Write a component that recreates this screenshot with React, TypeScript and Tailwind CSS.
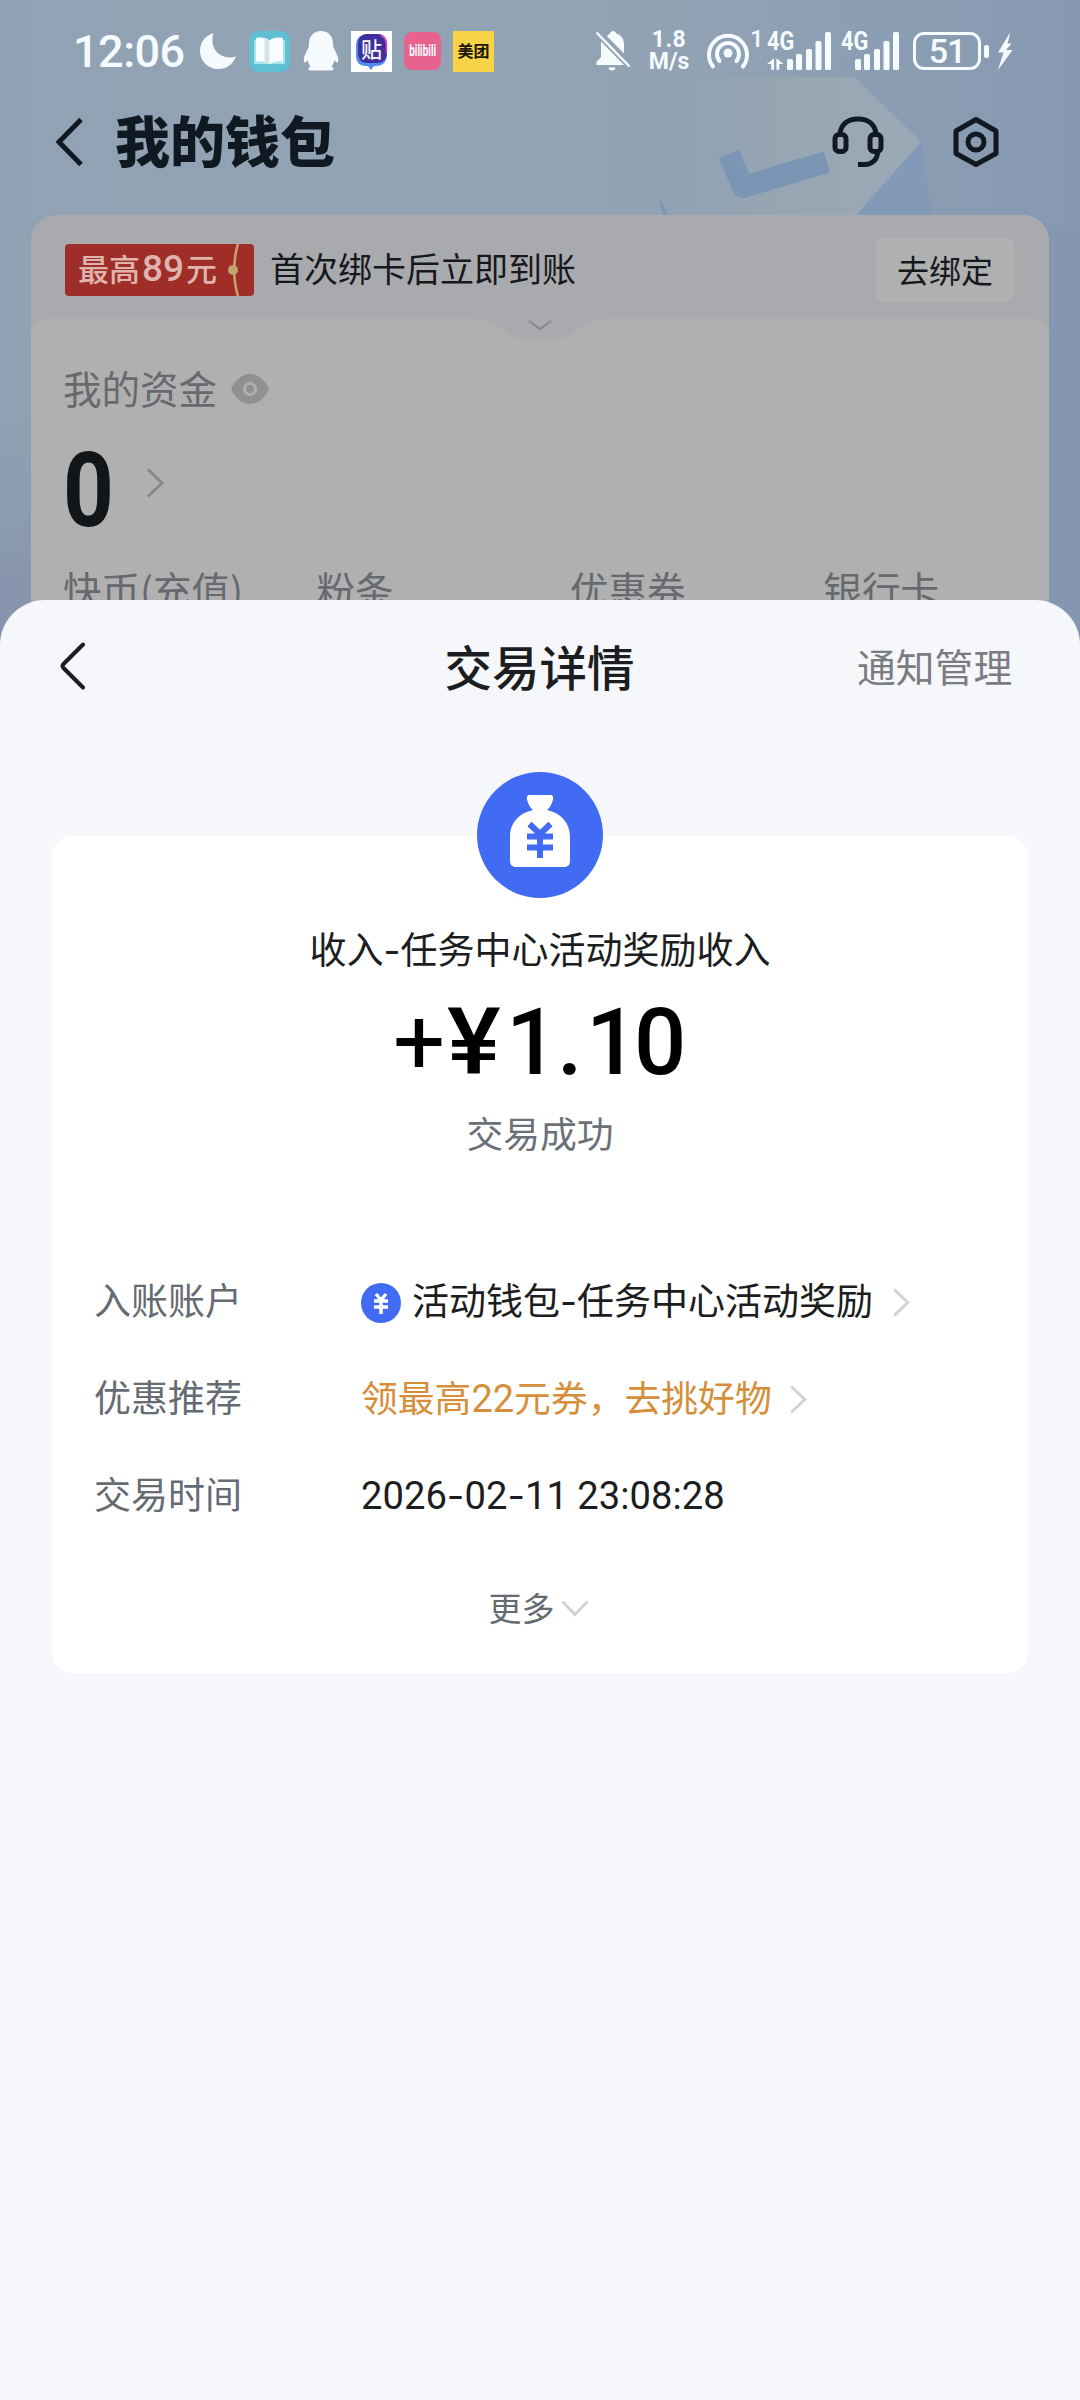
import React from "react";

interface DetailRowProps {
  label: string;
  children: React.ReactNode;
}

const accountTabs = ["快币(充值)", "粉条", "优惠券", "银行卡"];

// Wide hyphen used between words and in dates
function Dash() {
  return <span className="font-[Inter]">-</span>;
}

function ChevronRight({ className }: { className: string }) {
  return (
    <svg viewBox="0 0 18 30" fill="none" stroke="currentColor" strokeWidth="3" className={className}>
      <path d="M2 1.5 16 15 2 28.5" />
    </svg>
  );
}

function SignalBars() {
  return (
    <svg viewBox="0 0 44 38" className="h-[38px] w-[44px] shrink-0" fill="currentColor">
      <rect x="0" y="27" width="6" height="11" rx="1.5" />
      <rect x="9" y="22" width="6" height="16" rx="1.5" />
      <rect x="19" y="17" width="6" height="21" rx="1.5" />
      <rect x="28.500" y="9" width="6" height="29" rx="1.5" />
      <rect x="38" y="0" width="6" height="38" rx="1.5" />
    </svg>
  );
}

function StatusBar() {
  return (
    <div className="flex h-[102px] items-center pl-[73px] font-[Roboto] text-[#f6fbff]">
      <span className="w-[127px] text-[45px] leading-none font-medium tracking-[-0.5px]">12:06</span>
      {/* app notification icons */}
      <svg viewBox="0 0 36 36" className="h-9 w-9" fill="currentColor">
        <path d="M13.500 0C5 2.500 0 9.500 0 18c0 10 8 18 18 18 8.500 0 15-4.500 18-12.500C21 28 8.500 16 13.500 0Z" />
      </svg>
      <svg viewBox="0 0 41 41" className="ml-[13px] h-[41px] w-[41px]">
        <rect width="41" height="41" rx="9" fill="#5fbfd3" />
        <rect x="5" y="9" width="31" height="24" rx="1.500" fill="#a9e3ee" />
        <path d="M7 7c5-1 10-.5 13.500 2.500C24 6.500 29 6 34 7v23.500c-5-.5-9.500 0-13.500 3-4-3-8.500-3.500-13.500-3Z" fill="#fafdfd" />
        <path d="M15.500 7.500c2 .3 3.600 1 5 2v24c-1.400-1.200-3-1.900-5-2.300Z" fill="#d5e3e8" />
      </svg>
      <svg viewBox="0 0 36 40" className="ml-[13px] h-10 w-9" fill="currentColor">
        <path d="M18 0c7.500 0 12 5.500 12 12.500 0 2 .3 3.800 1.500 6C33.500 22.500 36 27 35 31c-1 1.500-2.500-.5-3.500-2-.5 2.500-1.500 4.500-3 6.500 3 1.500 2.500 4 0 4H7.500c-2.500 0-3-2.500 0-4-1.500-2-2.500-4-3-6.500-1 1.500-2.500 3.500-3.500 2-1-4 1.500-8.500 3.500-12.500 1.200-2.200 1.500-4 1.500-6C6 5.500 10.500 0 18 0Z" />
      </svg>
      <span className="relative ml-3 flex h-[41px] w-[41px] items-center justify-center bg-white">
        <svg viewBox="0 0 41 41" className="absolute inset-0">
          <path d="M14 4h12c7 0 10 5 10 11v8c0 8-4 12-11 12h-2l-3 4-3-4h-2C8 35 5 31 5 24v-9C5 8 8 4 14 4Z" fill="#4f8df5" />
          <path d="M16 3h11c6 0 9 4 9 11v7c0 7-4 11-10 11H16C10 32 7 28 7 21v-7C7 7 10 3 16 3Z" fill="#3f2f9c" />
          <path d="M30 4.500c4 1.500 5.500 5 5.500 10V22" fill="none" stroke="#e04fb0" strokeWidth="1.500" />
        </svg>
        <span className="relative -mt-1.5 font-['Noto_Sans_CJK_SC'] text-[21px] leading-none font-medium">贴</span>
      </span>
      <span className="ml-3 flex h-[38px] w-[37px] items-center justify-center rounded-[8px] bg-[#e7638e]">
        <span className="scale-x-[.62] scale-y-[1.05] text-[16px] leading-none font-bold">bilibili</span>
      </span>
      <span className="ml-3 flex h-[41px] w-[41px] items-center justify-center bg-[#f8d247] pb-0.5 font-['Noto_Sans_CJK_SC'] text-[16px] leading-none font-bold text-[#1c1708]">
        美团
      </span>

      {/* system indicators */}
      <svg viewBox="0 0 36 40" className="ml-[101px] h-10 w-9" fill="currentColor">
        <path d="M18 0c1.700 0 2.800 1 3.200 2.500C26.500 4 29 8 29 13v9.500L12 5.200c1-1.300 2-2.100 3-2.700C15.300 1 16.300 0 18 0ZM6 10.500 29 34H1.500v-3l4.500-5Z" />
        <path d="M13.500 36.500h7c0 2-1.500 3-3.500 3s-3.500-1-3.500-3Z" />
        <path d="m1.500 1.500 33 34" stroke="currentColor" strokeWidth="2.500" />
      </svg>
      <span className="ml-[15px] flex w-[46px] flex-col items-center text-[23px] leading-[22px] font-bold">
        <span className="tracking-[0.5px]">1.8</span>
        <span>M/s</span>
      </span>
      <svg viewBox="0 0 44 38" className="ml-[14px] h-[38px] w-[44px]" fill="none" stroke="currentColor" strokeWidth="4" strokeLinecap="round">
        <path d="M7 34.500A19 19 0 1 1 37 34.500" />
        <path d="M13.500 29A11 11 0 1 1 30.500 29" />
        <circle cx="22" cy="21" r="4.500" fill="currentColor" stroke="none" />
      </svg>
      <span className="-mt-[25px] w-[17px] text-[24px] leading-none font-medium">1</span>
      <span className="relative flex h-[38px] w-[20px] flex-col justify-end">
        <span className="absolute -top-[1px] left-0 origin-left scale-x-[.87] text-[25px] leading-[22px] font-bold">4G</span>
        <svg viewBox="0 0 18 12" className="h-3 w-[17px]" fill="currentColor">
          <path d="M7.500 0v12H4.500V6H0ZM10 12V0l7.500 6H13v6Z" />
        </svg>
      </span>
      <SignalBars />
      <span className="relative ml-[10px] h-[38px] w-[14px]">
        <span className="absolute -top-[1px] left-0 origin-left scale-x-[.87] text-[25px] leading-[22px] font-bold">4G</span>
      </span>
      <SignalBars />
      <span className="ml-[14px] flex h-[38px] w-[68px] items-center justify-center rounded-[11px] border-[3px] border-[#f6fbff] text-[34px] leading-none font-medium tracking-[-1px]">
        51
      </span>
      <span className="ml-[3px] h-[13px] w-[5px] rounded-[2px] bg-[#f6fbff]" />
      <svg viewBox="0 0 16 38" className="ml-2 h-[38px] w-4" fill="currentColor">
        <path d="M13.500 0 1 20.500h5.500L1 38 15.500 18H9l5.500-6.500H10.500Z" />
      </svg>
    </div>
  );
}

function Header() {
  return (
    <div className="flex h-[113px] items-start pt-[14px] text-[#101921]">
      <svg viewBox="0 0 28 50" className="ml-[55px] mt-[1px] h-[50px] w-7" fill="none" stroke="currentColor" strokeWidth="5">
        <path d="M26 2.500 4 25l22 22.500" />
      </svg>
      <h1 className="ml-[32px] -mt-[6px] w-[717px] text-[55px] leading-[56px] font-black">我的钱包</h1>
      <svg viewBox="0 0 52 52" className="h-[52px] w-[52px]" fill="none" stroke="currentColor" strokeWidth="5">
        <path d="M8 18C9 8 16 3 26 3s17 5 18 15" />
        <rect x="3" y="18.500" width="11" height="17" rx="4" />
        <rect x="38" y="18.500" width="11" height="17" rx="4" />
        <path d="M45.500 36c0 8-6 12.500-13 12.500h-6.500" />
      </svg>
      <svg viewBox="0 0 46 52" className="ml-[69px] h-[52px] w-[46px]" fill="none" stroke="currentColor" strokeWidth="5" strokeLinejoin="round">
        <path d="m23 3.500 20 11.500v22.500L23 48.500 3 37.500V15Z" />
        <circle cx="23" cy="26" r="8" />
      </svg>
    </div>
  );
}

function BindCardBanner() {
  return (
    <div className="flex h-[104px] items-center rounded-t-[26px] bg-[#a9aaae] pl-[34px] pr-[35px] pt-[6px]">
      <div className="relative h-[52px] w-[189px] rounded-[4px] bg-[#9f2e29] pl-[13px] text-[31px] leading-[47px] font-medium text-[#dfb3ae]">
        最高<span className="mx-[2px] font-[Roboto] text-[37px] leading-none">89</span>元
        <svg viewBox="0 0 12 52" className="absolute left-[162px] top-0 h-[52px] w-3">
          <path d="M11 0C6 16 6 36 11 52" fill="none" stroke="#c7a372" strokeWidth="2.500" />
          <circle cx="6" cy="26" r="5" fill="#c0a66d" />
        </svg>
      </div>
      <span className="ml-[16px] flex-1 pb-[4px] text-[34px] leading-none text-[#17181b]">首次绑卡后立即到账</span>
      <button className="h-[64px] w-[138px] rounded-[8px] bg-[#b0b0b0] pb-[3px] text-[32px] leading-none text-[#17181b]">
        去绑定
      </button>
    </div>
  );
}

function WalletCard() {
  return (
    <div className="mx-[31px] h-[430px] overflow-hidden rounded-t-[26px] bg-[#a9aaae]">
      <BindCardBanner />
      <div className="relative h-[340px] rounded-t-[16px] bg-[#b0b0b0] px-[32px]">
        <svg viewBox="0 0 130 26" className="absolute left-[444px] top-0 h-[26px] w-[130px]">
          <path d="M0 0h130C105 2 98 21 75 21H55C32 21 25 2 0 0Z" fill="#a9aaae" />
          <path d="m54 2 11 8 11-8" fill="none" stroke="#84868a" strokeWidth="2" />
        </svg>
        <div className="pt-[52px]">
          <div className="flex h-9 items-center text-[38.500px] leading-[40px] text-[#66696e]">
            <span className="-mt-[5px]">我的资金</span>
            <svg viewBox="0 0 38 30" className="ml-[14px] h-[30px] w-[38px]">
              <path d="M0 15C4 6 11 0 19 0s15 6 19 15c-4 9-11 15-19 15S4 24 0 15Z" fill="#8e9092" />
              <circle cx="19" cy="15" r="5.500" fill="none" stroke="#b0b0b0" strokeWidth="3" />
            </svg>
          </div>
        </div>
        <div className="mt-[38px] flex h-[90px] items-center">
          <span className="w-[83px] origin-left scale-x-[.86] font-[Roboto] text-[103px] leading-none font-bold text-[#121619]">
            0
          </span>
          <ChevronRight className="-mt-[14px] h-8 w-[18px] text-[#85878a]" />
        </div>
        <div className="mt-[33px] grid w-[1014px] grid-cols-4 text-[38.500px] leading-[40px] text-[#66696e]">
          {accountTabs.map((tab) => (
            <span key={tab}>{tab}</span>
          ))}
        </div>
      </div>
    </div>
  );
}

function DetailRow({ label, children }: DetailRowProps) {
  return (
    <div className="flex h-[97px] items-center text-[37px] leading-none">
      <span className="w-[267px] pb-[6px] text-[#656a73]">{label}</span>
      <div className="flex items-center text-[#1c1d20]">{children}</div>
    </div>
  );
}

function TransactionCard() {
  return (
    <div className="relative mx-[52px] mt-[104px] h-[837px] rounded-[20px] bg-white px-[42px] pt-[93px]">
      <svg viewBox="0 0 126 126" className="absolute -top-[64px] left-[425px] h-[126px] w-[126px]">
        <circle cx="63" cy="63" r="63" fill="#406bf2" />
        <path d="M53 23h20c3 0 3.500 2 3 4.500-1 4.500-3 8-6 10.500 14 3 23 13 23 27V88c0 5-2 7-6 7H39c-4 0-6-2-6-7V65c0-14 9-24 23-27-3-2.500-5-6-6-10.500-.5-2.500 0-4.500 3-4.500Z" fill="#fff" />
        <path d="m52.500 52 10.500 10 10.500-10M50 64.500h26M50 75.500h26M63 61v25" fill="none" stroke="#406bf2" strokeWidth="6" />
      </svg>
      <div className="text-center text-[37px] leading-[38px] text-[#1c1d20]">
        收入<Dash />任务中心活动奖励收入
      </div>
      <div className="ml-[299px] mt-[26px] flex h-[94px] font-[Roboto] text-[92px] leading-[94px] font-medium text-black">
        <span className="w-[54px] font-normal">+</span>
        <span className="w-[59px] origin-left scale-x-110">¥</span>
        <span className="w-[51px]">1</span>
        <span className="w-[29px]">.</span>
        <span className="w-[48px]">1</span>
        <span>0</span>
      </div>
      <div className="mt-[23px] text-center text-[36.800px] leading-[38px] text-[#6b7078]">交易成功</div>

      <div className="mt-[103px]">
        <DetailRow label="入账账户">
          <svg viewBox="0 0 40 40" className="mr-[11px] h-10 w-10">
            <circle cx="20" cy="20" r="20" fill="#406bf2" />
            <path d="m15 11 5 6 5-6M13 18h14M13 24h14M20 16v15" fill="none" stroke="#fff" strokeWidth="3.500" />
          </svg>
          <span className="pb-[5px]">
            活动钱包<Dash />任务中心活动奖励
          </span>
          <ChevronRight className="ml-[19px] h-[29px] w-[18px] text-[#d0d3d6]" />
        </DetailRow>
        <DetailRow label="优惠推荐">
          <span className="pb-[4px] text-[36.800px] text-[#d58f3b]">
            领最高<span className="font-[Roboto] text-[38px]">22</span>元券，去挑好物
          </span>
          <ChevronRight className="ml-[17px] h-[29px] w-[18px] text-[#d0d3d6]" />
        </DetailRow>
        <DetailRow label="交易时间">
          <span className="pb-[2px] font-[Roboto] text-[38.200px]">
            2026
            <Dash />
            02
            <Dash />
            11 23:08:28
          </span>
        </DetailRow>
      </div>

      <button className="mx-auto mt-[44px] flex items-center pr-[3px] text-[33px] leading-[36px] text-[#656a73]">
        更多
        <svg viewBox="0 0 28 17" className="ml-[6px] mt-[3px] h-[17px] w-7" fill="none" stroke="#d0d3d6" strokeWidth="3">
          <path d="m1.500 1.500 12.500 13 12.500-13" />
        </svg>
      </button>
    </div>
  );
}

function TransactionSheet() {
  return (
    <section className="relative -mt-[45px] flex-1 rounded-t-[45px] bg-[#f6f7fb]">
      <div className="flex h-[132px] items-center justify-between pl-[60px] pr-[67px]">
        <div className="w-[156px]">
          <svg viewBox="0 0 25 48" className="h-12 w-[25px]" fill="none" stroke="#1c1d20" strokeWidth="4" strokeLinecap="round" strokeLinejoin="round">
            <path d="M23 2.500 3.500 22q-2 2 0 4L23 45.500" />
          </svg>
        </div>
        <h2 className="pb-[1px] pl-[6px] text-[47.500px] leading-none font-medium text-[#1c1d20]">交易详情</h2>
        <span className="w-[156px] pb-[2px] text-[38.800px] leading-none whitespace-nowrap text-[#7b7c80]">通知管理</span>
      </div>
      <TransactionCard />
    </section>
  );
}

export default function App() {
  return (
    <div className="relative flex h-[2400px] w-[1080px] flex-col overflow-hidden bg-[#8a9cb2] font-['Noto_Sans_CJK_SC',sans-serif]">
      {/* dimmed wallet artwork behind the header */}
      <svg viewBox="0 0 1080 650" className="absolute left-0 top-0 h-[650px] w-[1080px]">
        <defs>
          <linearGradient id="sky" x1="0" y1="0" x2="1" y2="0">
            <stop offset="0" stopColor="#91a2b4" />
            <stop offset="0.6" stopColor="#91a3b3" />
            <stop offset="1" stopColor="#8799b2" />
          </linearGradient>
          <linearGradient id="fade" x1="0" y1="0" x2="0" y2="1">
            <stop offset="0.600" stopColor="#8496ae" stopOpacity="0" />
            <stop offset="1" stopColor="#8490ab" />
          </linearGradient>
          <linearGradient id="paper" x1="0" y1="0" x2="1" y2="0">
            <stop offset="0.150" stopColor="#98a6b3" stopOpacity="0" />
            <stop offset="0.500" stopColor="#98a6b3" />
            <stop offset="1" stopColor="#9ba8b6" />
          </linearGradient>
        </defs>
        <rect width="1080" height="650" fill="url(#sky)" />
        <rect width="540" height="650" fill="url(#fade)" />
        <rect x="1049" y="230" width="31" height="420" fill="#8597b0" />
        <path d="M921 142 932 215h-76Z" fill="#8399b8" />
        <path d="M640 77h215l66 65-65 73H668Z" fill="url(#paper)" />
        <path d="m659 197 9 18h-5Z" fill="#7d94b3" />
        <path d="m729 154 14 33 84-25" fill="none" stroke="#7b95b4" strokeWidth="22" strokeLinejoin="round" />
      </svg>
      <div className="relative">
        <StatusBar />
        <Header />
        <WalletCard />
      </div>
      <TransactionSheet />
    </div>
  );
}
